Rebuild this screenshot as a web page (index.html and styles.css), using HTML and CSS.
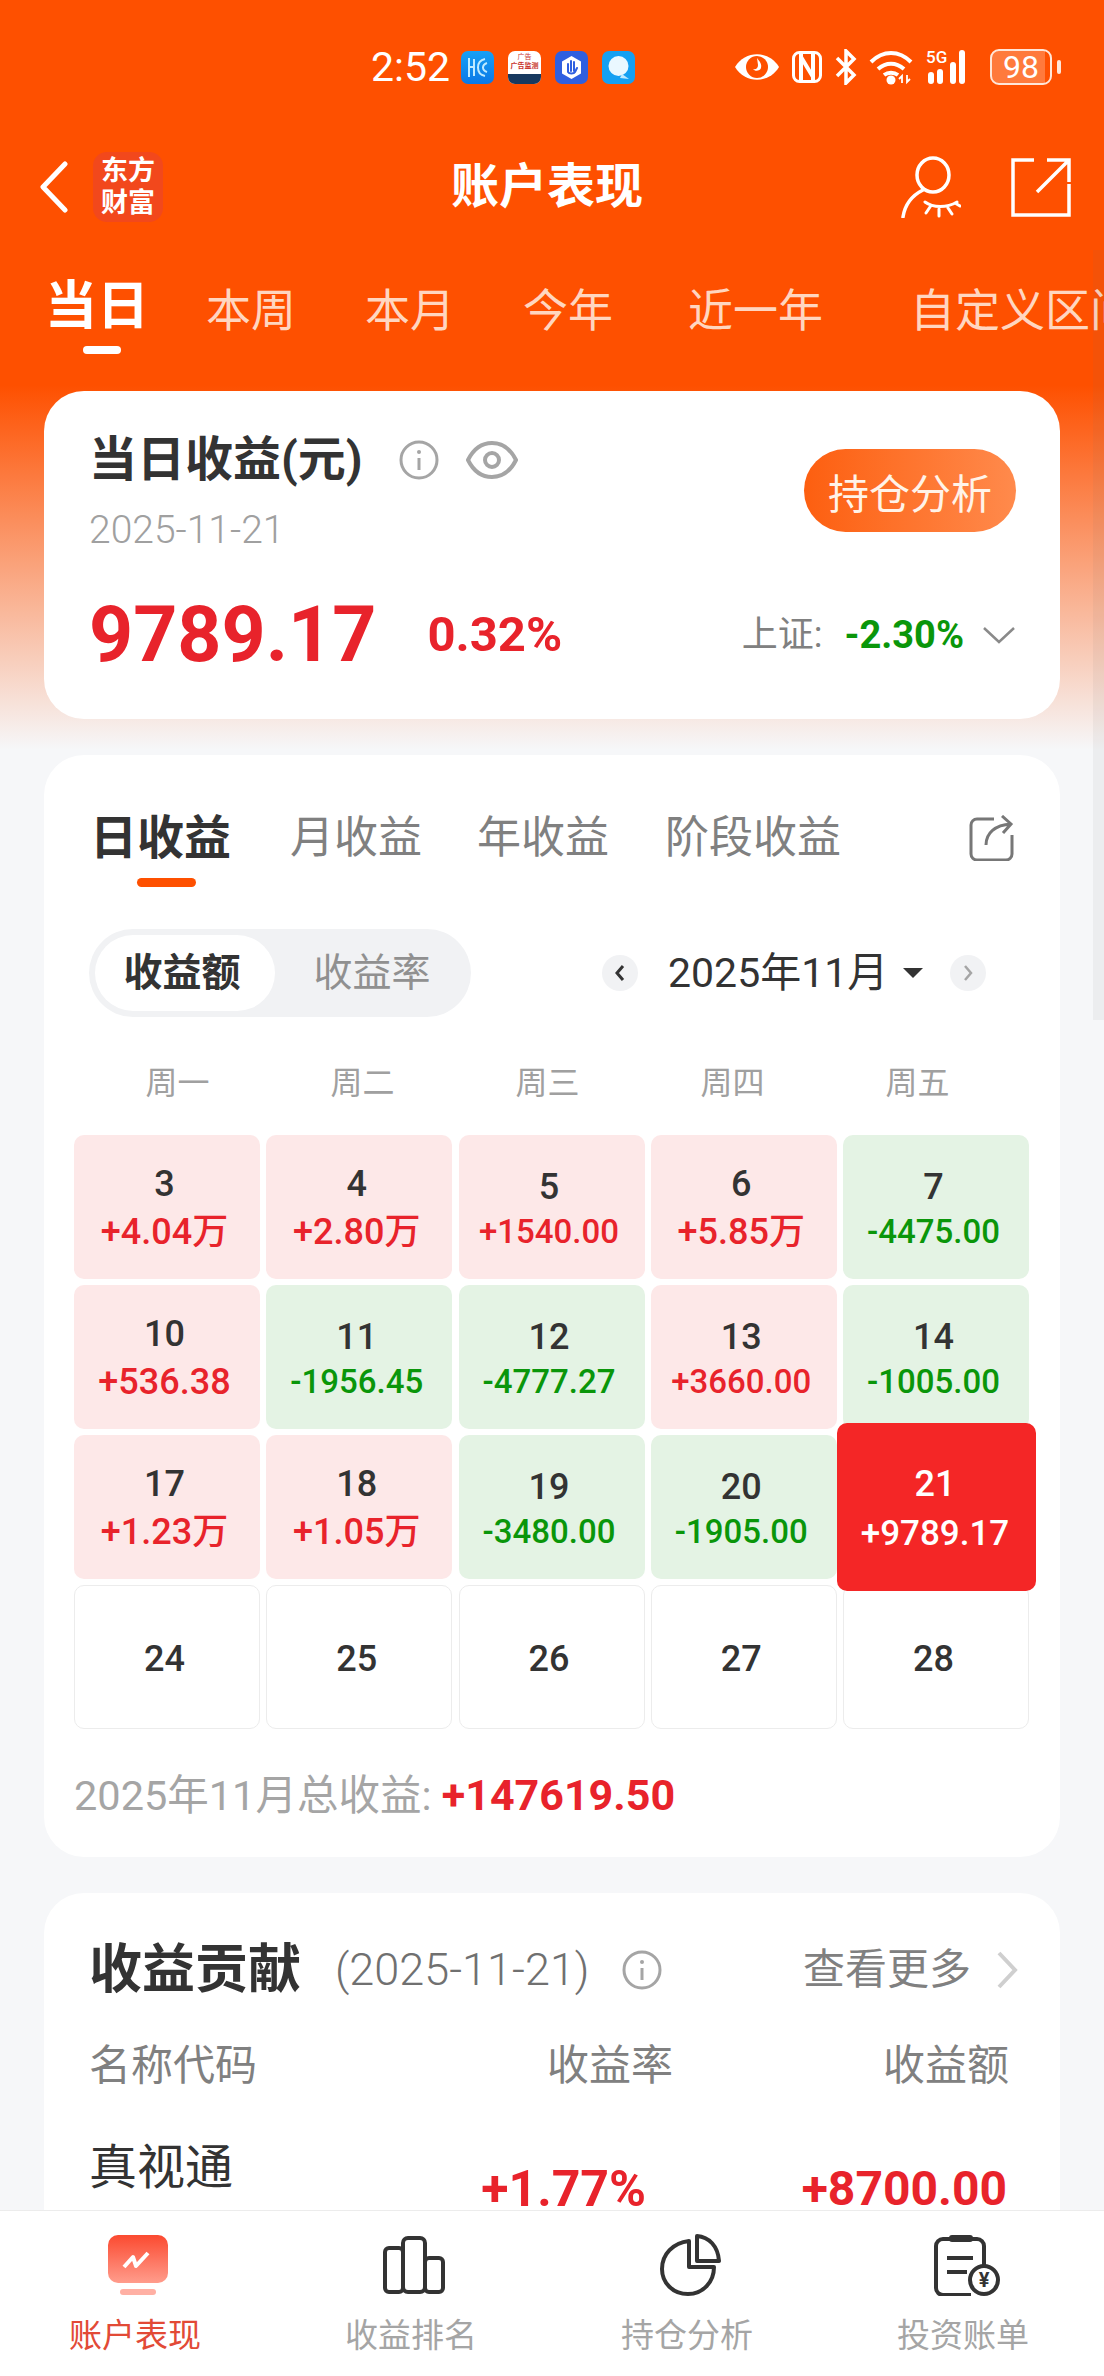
FILE: index.html
```html
<!DOCTYPE html>
<html lang="zh-CN">
<head>
<meta charset="utf-8">
<title>账户表现</title>
<link rel="stylesheet" href="styles.css">
</head>
<body>
<div class="page">
  <div class="scrollbar"></div>

  <header class="status">
    <span class="status-time">2:52</span>
    <span class="app app-blue"><svg viewBox="0 0 33 33" width="33" height="33"><path d="M8 7v19M8 16h5M13 8v17M24 8c-5 1-7 4-7 8.500s2 7.500 7 8.500M26 12c-3 1-4 2-4 4.500s1 3.500 4 4.500" fill="none" stroke="#bfeaff" stroke-width="2"/></svg></span>
    <span class="app app-white"><span class="app-white-top">广告</span><span class="app-white-mid">广告监测</span><span class="app-white-bot"></span></span>
    <span class="app app-indigo"><svg viewBox="0 0 33 33" width="33" height="33"><path d="M16.500 5L26 10.500v12L16.500 28 7 22.500v-12z" fill="#fff"/><path d="M13 21v-8M16 20v-10M19 20v-9M13 21c1 2 6 2 7 0l2-4" fill="none" stroke="#2f5fe0" stroke-width="2" stroke-linecap="round"/></svg></span>
    <span class="app app-sky"><svg viewBox="0 0 33 33" width="33" height="33"><ellipse cx="16.500" cy="15" rx="10" ry="10" fill="#eaf8ff"/><path d="M20 23l7 5-9-1z" fill="#bfeaff"/></svg></span>

    <span class="status-icons">
      <svg class="st-eye" viewBox="0 0 46 32" width="46" height="32"><path d="M1 16C11-1 35-1 45 16 35 33 11 33 1 16Z" fill="#fff"/><circle cx="23" cy="16" r="11" fill="#fe5000"/><path d="M23 7c3 4 5 6 4 10-1 3-6 4-8 1 3 1 5-1 5-4z" fill="#fff"/></svg>
      <svg class="st-nfc" viewBox="0 0 30 32" width="30" height="32"><rect x="1.500" y="1.500" width="27" height="29" rx="6" fill="none" stroke="#fff" stroke-width="3"/><path d="M9 3v26M21 3v26M9 6l12 20" fill="none" stroke="#fff" stroke-width="4"/></svg>
      <svg class="st-bt" viewBox="0 0 22 36" width="22" height="36"><path d="M2 9l17 17-8 8V2l8 8L2 27" fill="none" stroke="#fff" stroke-width="3.500"/></svg>
      <svg class="st-wifi" viewBox="0 0 45 36" width="45" height="36"><path d="M2 13c12-12 28-12 40 0M9 20c8-7 18-7 26 0M15 26c4-3 10-3 14 0" fill="none" stroke="#fff" stroke-width="4"/><circle cx="22" cy="31" r="4.500" fill="#fff"/><path d="M33 34v-7l-3 3M38 26v7l3-3" fill="none" stroke="#fff" stroke-width="1.800"/></svg>
      <span class="st-signal">
        <span class="st-5g">5G</span>
        <span class="bar bar-1"></span><span class="bar bar-2"></span><span class="bar bar-3"></span><span class="bar bar-4"></span>
      </span>
      <span class="battery"><span class="battery-level">98</span></span>
      <span class="battery-tip"></span>
    </span>
  </header>

  <nav class="nav">
    <svg class="nav-back" viewBox="0 0 30 52" width="30" height="52"><path d="M26 3L4 26l22 23" fill="none" stroke="#fff" stroke-width="5" stroke-linecap="round" stroke-linejoin="round"/></svg>
    <span class="nav-logo">东方<br>财富</span>
    <h1 class="nav-title">账户表现</h1>
    <svg class="nav-user" viewBox="0 0 60 62" width="60" height="62"><ellipse cx="32" cy="19" rx="16" ry="17" fill="none" stroke="#fff" stroke-width="3.500"/><path d="M22 34C10 40 4 48 2 61" fill="none" stroke="#fff" stroke-width="3.500" stroke-linecap="round"/><path d="M24 46c8 6 22 6 32 0M29 51l-4 6M38 53v7M47 52l4 6M54 47l5 3" fill="none" stroke="#fff" stroke-width="3" stroke-linecap="round"/></svg>
    <svg class="nav-share" viewBox="0 0 60 60" width="60" height="60"><path d="M23 3H2v55h56V27" fill="none" stroke="#fff" stroke-width="3.500"/><path d="M26 35L58 3M36 3h22v22" fill="none" stroke="#fff" stroke-width="3.500"/></svg>
  </nav>

  <div class="period">
    <div class="period-tab period-tab-on"><span>当日</span><i class="period-mark"></i></div>
    <div class="period-tab">本周</div>
    <div class="period-tab">本月</div>
    <div class="period-tab">今年</div>
    <div class="period-tab">近一年</div>
    <div class="period-tab">自定义区间</div>
  </div>

  <section class="card summary">
    <div class="summary-top">
      <div>
        <div class="summary-head">
          <h2 class="summary-title">当日收益(元)</h2>
          <svg class="icon-info" viewBox="0 0 40 40" width="40" height="40"><circle cx="20" cy="20" r="18" fill="none" stroke="#a5a5a5" stroke-width="3"/><circle cx="20" cy="12" r="2" fill="#a5a5a5"/><path d="M20 18v12" stroke="#a5a5a5" stroke-width="3"/></svg>
          <svg class="icon-eye" viewBox="0 0 52 40" width="52" height="40"><path d="M2 20C8 8 17 3 26 3s18 5 24 17c-6 12-15 17-24 17S8 32 2 20Z" fill="none" stroke="#a5a5a5" stroke-width="4"/><circle cx="26" cy="20" r="7" fill="none" stroke="#a5a5a5" stroke-width="4"/></svg>
        </div>
        <div class="summary-date">2025-11-21</div>
      </div>
      <button class="summary-btn">持仓分析</button>
    </div>
    <div class="summary-bottom">
      <span class="summary-amount">9789.17</span>
      <span class="summary-rate">0.32%</span>
      <span class="summary-index">上证:</span>
      <span class="summary-index-val">-2.30%</span>
      <svg class="summary-chev" viewBox="0 0 34 18" width="34" height="18"><path d="M2 2l15 14L32 2" fill="none" stroke="#8a8a8a" stroke-width="2.500"/></svg>
    </div>
  </section>

  <section class="card calendar">
    <div class="cal-tabs">
      <div class="cal-tab cal-tab-on"><span>日收益</span><i class="cal-mark"></i></div>
      <div class="cal-tab">月收益</div>
      <div class="cal-tab">年收益</div>
      <div class="cal-tab">阶段收益</div>
      <svg class="cal-share" viewBox="0 0 46 46" width="46" height="46"><path d="M26 4H9a6 6 0 0 0-6 6v29a6 6 0 0 0 6 6h29a6 6 0 0 0 6-6V20" fill="none" stroke="#777" stroke-width="3"/><path d="M18 30c0-12 9-20 25-21M34 1l9 8-8 9" fill="none" stroke="#777" stroke-width="3"/></svg>
    </div>

    <div class="cal-controls">
      <div class="toggle">
        <span class="toggle-item toggle-on">收益额</span>
        <span class="toggle-item">收益率</span>
      </div>
      <span class="month-btn month-prev"><svg viewBox="0 0 36 36" width="36" height="36"><path d="M21 11l-6 7 6 7" fill="none" stroke="#333" stroke-width="3"/></svg></span>
      <span class="month-label">2025年11月</span>
      <span class="month-caret"></span>
      <span class="month-btn month-next"><svg viewBox="0 0 36 36" width="36" height="36"><path d="M15 11l6 7-6 7" fill="none" stroke="#a5a5a5" stroke-width="2.500"/></svg></span>
    </div>

    <div class="weekdays">
      <span>周一</span><span>周二</span><span>周三</span><span>周四</span><span>周五</span>
    </div>

    <div class="days">
      <div class="day day-up day-wan"><b>3</b><em>+4.04万</em></div>
      <div class="day day-up day-wan"><b>4</b><em>+2.80万</em></div>
      <div class="day day-up"><b>5</b><em>+1540.00</em></div>
      <div class="day day-up day-wan"><b>6</b><em>+5.85万</em></div>
      <div class="day day-down"><b>7</b><em>-4475.00</em></div>

      <div class="day day-up day-wan"><b>10</b><em>+536.38</em></div>
      <div class="day day-down"><b>11</b><em>-1956.45</em></div>
      <div class="day day-down"><b>12</b><em>-4777.27</em></div>
      <div class="day day-up"><b>13</b><em>+3660.00</em></div>
      <div class="day day-down"><b>14</b><em>-1005.00</em></div>

      <div class="day day-up day-wan"><b>17</b><em>+1.23万</em></div>
      <div class="day day-up day-wan"><b>18</b><em>+1.05万</em></div>
      <div class="day day-down"><b>19</b><em>-3480.00</em></div>
      <div class="day day-down"><b>20</b><em>-1905.00</em></div>
      <div class="day day-today"><b>21</b><em>+9789.17</em></div>

      <div class="day day-empty"><b>24</b></div>
      <div class="day day-empty"><b>25</b></div>
      <div class="day day-empty"><b>26</b></div>
      <div class="day day-empty"><b>27</b></div>
      <div class="day day-empty"><b>28</b></div>
    </div>

    <div class="cal-total">2025年11月总收益: <strong>+147619.50</strong></div>
  </section>

  <section class="card contrib">
    <div class="contrib-head">
      <h2 class="contrib-title">收益贡献</h2>
      <span class="contrib-date">(2025-11-21)</span>
      <svg class="contrib-info" viewBox="0 0 40 40" width="40" height="40"><circle cx="20" cy="20" r="18" fill="none" stroke="#a5a5a5" stroke-width="3"/><circle cx="20" cy="12" r="2" fill="#a5a5a5"/><path d="M20 18v12" stroke="#a5a5a5" stroke-width="3"/></svg>
      <span class="contrib-more">查看更多</span>
      <svg class="contrib-chev" viewBox="0 0 22 38" width="22" height="38"><path d="M3 2l16 17L3 36" fill="none" stroke="#cfcfcf" stroke-width="4"/></svg>
    </div>
    <div class="contrib-cols">
      <span>名称代码</span><span class="num">收益率</span><span class="num">收益额</span>
    </div>
    <div class="contrib-row">
      <div><div class="contrib-name">真视通</div><div class="contrib-code">002771</div></div>
      <div class="contrib-rate">+1.77%</div>
      <div class="contrib-amount">+8700.00</div>
    </div>
  </section>

  <footer class="tabbar">
    <div class="tabbar-item tabbar-on">
      <svg viewBox="0 0 62 62" width="62" height="62"><defs><linearGradient id="tabRed" x1="0" y1="0" x2="0" y2="1"><stop offset="0" stop-color="#fb4a30"/><stop offset="1" stop-color="#ff9c8c"/></linearGradient></defs><rect x="1" y="1" width="60" height="48" rx="10" fill="url(#tabRed)"/><rect x="13" y="55" width="36" height="6" rx="3" fill="#ffb0a4"/><path d="M17 33l9-10 3 9 12-13" fill="none" stroke="#fff" stroke-width="4" stroke-linejoin="round"/></svg>
      <span>账户表现</span>
    </div>
    <div class="tabbar-item">
      <svg viewBox="0 0 62 62" width="62" height="62"><g fill="none" stroke="#333" stroke-width="4"><rect x="2" y="14" width="18" height="44" rx="4"/><rect x="20" y="4" width="22" height="54" rx="5"/><rect x="42" y="24" width="18" height="34" rx="4"/></g></svg>
      <span>收益排名</span>
    </div>
    <div class="tabbar-item">
      <svg viewBox="0 0 62 62" width="62" height="62"><g fill="none" stroke="#333" stroke-width="4" stroke-linejoin="round"><path d="M30 7C14 9 3 20 3 35c0 14 11 25 26 25s26-12 26-27H30Z"/><path d="M38 2c12 1 21 10 22 25H38Z"/></g></svg>
      <span>持仓分析</span>
    </div>
    <div class="tabbar-item">
      <svg class="tabbar-bill" viewBox="0 0 66 62" width="66" height="62"><path d="M50 39V12a7 7 0 0 0-7-7H9a7 7 0 0 0-7 7v42a7 7 0 0 0 7 7h28" fill="none" stroke="#333" stroke-width="4"/><rect x="15" y="1" width="24" height="7" rx="3" fill="#333"/><path d="M13 24h26M13 38h20" stroke="#333" stroke-width="4"/><circle cx="50" cy="46" r="14" fill="#fff" stroke="#333" stroke-width="4"/><text x="50" y="53" class="yen">¥</text></svg>
      <span>投资账单</span>
    </div>
  </footer>
</div>
</body>
</html>
```

FILE: styles.css
```css
* { box-sizing: border-box; }
html, body { margin: 0; padding: 0; }
body {
  font-family: Roboto, "Noto Sans CJK SC", sans-serif;
  color: #333;
}
h1, h2 { margin: 0; font: inherit; }
em { font-style: normal; }

.page {
  position: relative;
  width: 1104px;
  height: 2376px;
  overflow: hidden;
  background: linear-gradient(180deg, #fe5000 0, #fe5000 385px, #f6f7f9 750px);
}
.scrollbar {
  position: absolute;
  top: 250px;
  right: 0;
  width: 11px;
  height: 770px;
  background: rgba(120, 120, 120, .07);
}

/* status bar */
.status {
  display: flex;
  align-items: center;
  height: 134px;
  padding-left: 371px;
  color: #fff;
}
.status-time { width: 90px; font-size: 41px; line-height: 40px; font-weight: 400; }
.app {
  display: block;
  flex: none;
  width: 33px;
  height: 33px;
  margin-right: 14px;
  border-radius: 7px;
  overflow: hidden;
}
.app svg { display: block; }
.app-blue { background: linear-gradient(180deg, #18a0f5, #0b78e6); }
.app-indigo { background: #2f5fe0; }
.app-sky { background: #15a0f2; }
.app-white { display: flex; flex-direction: column; background: #fff; }
.app-white-top { height: 9px; margin-top: 2px; font-size: 7px; line-height: 9px; color: #c8322c; text-align: center; }
.app-white-mid { height: 9px; font-size: 7px; line-height: 9px; font-weight: 700; color: #c8322c; text-align: center; white-space: nowrap; }
.app-white-bot { flex: 1; margin-top: 3px; background: #17395f; }

.status-icons { display: flex; align-items: center; margin-left: 85px; }
.st-nfc { margin-left: 12px; }
.st-bt { margin-left: 13px; }
.st-wifi { margin-left: 12px; }
.st-signal {
  position: relative;
  display: flex;
  align-items: flex-end;
  gap: 3px;
  width: 50px;
  height: 34px;
  margin-left: 12px;
  padding-left: 2px;
}
.st-5g { position: absolute; top: -2px; left: 0; font-size: 17px; line-height: 18px; font-weight: 500; }
.bar { width: 6px; background: #fff; border-radius: 3px; }
.bar-1 { height: 12px; }
.bar-2 { height: 15px; }
.bar-3 { height: 22px; margin-left: 4px; }
.bar-4 { height: 34px; }
.battery {
  display: flex;
  align-items: center;
  justify-content: center;
  width: 62px;
  height: 36px;
  margin-left: 14px;
  border: 2.500px solid #ffe6d8;
  border-radius: 9px;
  background: linear-gradient(90deg, #ff7a3c 92%, transparent 92%);
}
.battery-level { font-size: 32px; line-height: 32px; color: #fff; }
.battery-tip { width: 4px; height: 14px; margin-left: 5px; background: #ffe6d8; border-radius: 2px; }

/* navigation bar */
.nav {
  position: relative;
  display: flex;
  align-items: center;
  height: 106px;
  padding-left: 39px;
}
.nav-logo {
  display: block;
  flex: none;
  width: 70px;
  height: 70px;
  margin-left: 24px;
  padding-top: 3px;
  border-radius: 14px;
  background: #f2481c;
  color: #fff;
  font-size: 27px;
  line-height: 32px;
  font-weight: 700;
  text-align: center;
}
.nav-title {
  flex: none;
  width: 190px;
  margin-left: 288px;
  color: #fff;
  font-size: 48px;
  line-height: 60px;
  font-weight: 700;
  white-space: nowrap;
}
.nav-user { margin-left: 260px; }
.nav-share { margin-left: 50px; }

/* period tabs */
.period {
  display: grid;
  grid-template-columns: 161px 159px 158px 165px 222px auto;
  height: 151px;
  padding: 39px 0 0 45px;
  color: #ffd6c0;
  font-size: 45px;
  line-height: 56px;
  white-space: nowrap;
}
.period-tab { padding-top: 5px; }
.period-tab-on {
  display: flex;
  flex-direction: column;
  align-items: flex-start;
  padding-top: 0;
  color: #fff;
  font-size: 52px;
  font-weight: 700;
}
.period-mark {
  display: block;
  width: 38px;
  height: 8px;
  margin: 11px 0 0 38px;
  border-radius: 4px;
  background: #fff;
}

/* cards */
.card {
  width: 1016px;
  margin-left: 44px;
  background: #fff;
  border-radius: 40px;
}

.summary { height: 328px; padding: 41px 44px 0 45px; }
.summary-top { display: flex; justify-content: space-between; align-items: flex-start; }
.summary-head { display: flex; align-items: center; height: 56px; }
.summary-title { font-size: 48px; line-height: 56px; font-weight: 700; white-space: nowrap; }
.icon-info { margin-left: 36px; }
.icon-eye { margin-left: 27px; }
.summary-date { margin-top: 20px; font-size: 39px; line-height: 44px; font-weight: 300; color: #a0a0a0; }
.summary-btn {
  width: 212px;
  height: 83px;
  margin-top: 17px;
  padding: 0;
  border: 0;
  border-radius: 42px;
  background: linear-gradient(90deg, #fd5f10, #ff8a4c);
  color: #fff3e8;
  font-family: inherit;
  font-size: 41px;
}
.summary-bottom { display: flex; align-items: center; height: 90px; margin-top: 38px; }
.summary-amount { font-size: 77px; line-height: 90px; font-weight: 700; color: #e8232b; }
.summary-rate { margin-left: 51px; font-size: 49px; line-height: 60px; font-weight: 700; color: #e8232b; }
.summary-index { margin-left: auto; font-size: 36px; line-height: 50px; color: #808080; }
.summary-index-val { margin-left: 22px; font-size: 38px; line-height: 50px; font-weight: 700; color: #0a960a; }
.summary-chev { margin-left: 18px; }

/* calendar card */
.calendar { height: 1102px; margin-top: 36px; padding: 53px 31px 0 30px; }
.cal-tabs {
  display: grid;
  grid-template-columns: 200px 187px 188px 1fr auto;
  height: 79px;
  padding: 0 15px 0 16px;
  color: #808080;
  font-size: 44px;
  line-height: 60px;
  white-space: nowrap;
}
.cal-tab-on { color: #333; font-size: 47px; font-weight: 700; }
.cal-tab-on span { display: block; }
.cal-mark {
  display: block;
  width: 59px;
  height: 9px;
  margin: 10px 0 0 47px;
  border-radius: 5px;
  background: #fe5000;
}
.cal-share { margin-top: 7px; }

.cal-controls { display: flex; align-items: center; margin-top: 42px; padding-left: 15px; }
.toggle {
  display: flex;
  flex: none;
  width: 382px;
  height: 88px;
  padding: 6px;
  border-radius: 44px;
  background: #f1f2f4;
}
.toggle-item {
  flex: 1;
  border-radius: 38px;
  color: #909090;
  font-size: 39px;
  line-height: 76px;
  text-align: center;
}
.toggle-on { flex: none; width: 180px; padding-right: 6px; background: #fff; color: #333; font-weight: 700; }
.toggle-item:last-child { padding-left: 4px; }
.month-btn {
  display: block;
  flex: none;
  width: 36px;
  height: 36px;
  border-radius: 50%;
  background: #f1f2f4;
}
.month-btn svg { display: block; }
.month-prev { margin-left: 131px; }
.month-label { margin-left: 30px; width: 214px; font-size: 41px; line-height: 50px; white-space: nowrap; }
.month-caret {
  width: 0;
  height: 0;
  margin-left: 21px;
  border-style: solid;
  border-width: 10px 10px 0;
  border-color: #333 transparent transparent;
}
.month-next { margin-left: 27px; }

.weekdays {
  display: grid;
  grid-template-columns: repeat(5, 185px);
  margin: 46px 0 0 11px;
  color: #a0a0a0;
  font-size: 32px;
  line-height: 40px;
  text-align: center;
}

.days {
  display: grid;
  grid-template-columns: repeat(5, 186px);
  grid-auto-rows: 144px;
  gap: 6px 6.250px;
  margin-top: 32px;
}
.day {
  display: flex;
  flex-direction: column;
  align-items: center;
  padding: 34px 5px 0 0;
  border-radius: 10px;
}
.day b { font-size: 36px; line-height: 36px; font-weight: 500; color: #333; }
.day em { margin-top: 9px; font-size: 33px; line-height: 36px; font-weight: 500; white-space: nowrap; }
.day-up { background: #fde8e8; color: #e8232b; }
.day-down { background: #e4f3e4; color: #0a960a; }
.day-wan { padding-top: 31px; }
.day-wan em { margin-top: 12px; font-size: 36px; }
.day-today {
  z-index: 1;
  margin: -12px -7px -12px -6px;
  padding: 43px 3px 0 0;
  background: #f42626;
  color: #fff;
}
.day-today b { color: #fff; }
.day-today em { margin-top: 14px; font-size: 35px; }
.day-empty {
  justify-content: center;
  padding: 4px 5px 0 0;
  border: 1px solid #ececec;
  background: #fff;
}

.cal-total { margin-top: 41px; font-size: 41.500px; line-height: 50px; color: #a5a5a5; white-space: nowrap; }
.cal-total strong { font-size: 43px; font-weight: 700; color: #e8232b; }

/* contribution card */
.contrib { height: 600px; margin-top: 36px; padding: 47px 42px 0 45px; }
.contrib-head { display: flex; align-items: center; height: 60px; }
.contrib-title { font-size: 53px; line-height: 60px; font-weight: 700; white-space: nowrap; }
.contrib-date { margin-left: 34px; font-size: 45px; line-height: 50px; font-weight: 300; color: #707070; white-space: nowrap; }
.contrib-info { margin-left: 32px; }
.contrib-more { margin-left: auto; font-size: 42px; line-height: 50px; color: #808080; white-space: nowrap; }
.contrib-chev { margin-left: 25px; }
.contrib-cols,
.contrib-row {
  display: grid;
  grid-template-columns: 1fr 300px 336px;
  padding-right: 9px;
}
.contrib-cols { margin-top: 41px; color: #808080; font-size: 42px; line-height: 50px; }
.num { text-align: right; }
.contrib-row { margin-top: 47px; }
.contrib-name { font-size: 48px; line-height: 60px; }
.contrib-code { margin-top: 6px; font-size: 32px; line-height: 40px; color: #a0a0a0; }
.contrib-rate,
.contrib-amount { margin-top: 21px; font-size: 48px; line-height: 60px; font-weight: 700; color: #e8232b; text-align: right; white-space: nowrap; }
.contrib-rate { padding-right: 27px; font-size: 50px; }
.contrib-amount { padding-right: 2px; }

/* bottom tabs */
.tabbar {
  position: absolute;
  left: 0;
  right: 0;
  bottom: 0;
  display: grid;
  grid-template-columns: repeat(4, 1fr);
  height: 166px;
  padding-top: 23px;
  border-top: 1px solid #ececec;
  background: #fff;
}
.tabbar-item {
  display: flex;
  flex-direction: column;
  align-items: center;
  margin-left: -6px;
  color: #a5a5a5;
  font-size: 33px;
  line-height: 40px;
}
.tabbar-item svg { display: block; margin-left: 5px; }
.tabbar-item .tabbar-bill { margin-left: 8px; }
.tabbar-item span { margin-top: 20px; }
.tabbar-on { color: #e24a36; }
.yen { fill: #333; font-size: 20px; font-weight: 700; text-anchor: middle; }
```
